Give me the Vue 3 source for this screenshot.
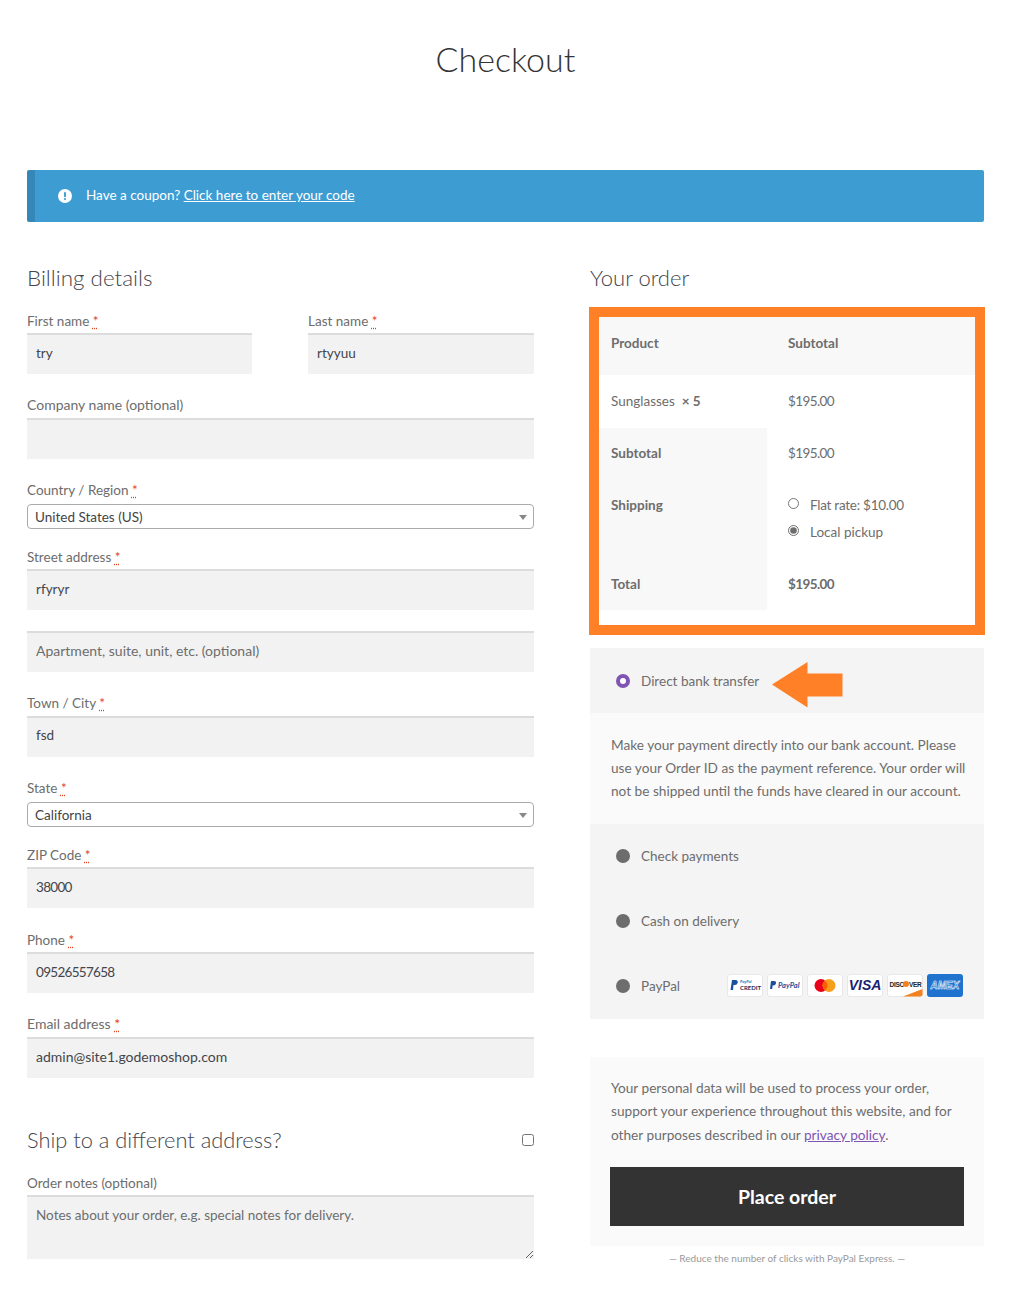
<script setup>
const rows = [
  { id: 'company', label: 'Company name (optional)', value: '' },
]
const afterCountry = [
  { label: 'Town / City', value: 'fsd' },
]
const lower = [
  { label: 'ZIP Code', value: '38000', cls: 'num low' },
  { label: 'Phone', value: '09526557658', cls: 'num low' },
  { label: 'Email address', value: 'admin@site1.godemoshop.com', cls: 'wide' },
]
</script>

<template>
  <div class="page">
    <h1 class="title">Checkout</h1>

    <div class="notice">
      <svg class="notice-icon" viewBox="0 0 16 16" width="14" height="14">
        <circle cx="8" cy="8" r="8" fill="#fff" />
        <rect x="6.9" y="3.4" width="2.2" height="5.8" rx="1" fill="#3d9cd2" />
        <circle cx="8" cy="11.4" r="1.25" fill="#3d9cd2" />
      </svg>
      <span class="notice-text">Have a coupon? <a href="#" class="notice-link">Click here to enter your code</a></span>
    </div>

    <div class="columns">
      <div class="billing">
        <h3 class="section-title billing-title">Billing details</h3>

        <div class="name-row">
          <div class="field">
            <label>First name <abbr>*</abbr></label>
            <input class="input" value="try" />
          </div>
          <div class="field">
            <label>Last name <abbr>*</abbr></label>
            <input class="input" value="rtyyuu" />
          </div>
        </div>

        <div v-for="r in rows" :key="r.id" class="field wide">
          <label>{{ r.label }}</label>
          <input class="input" :value="r.value" />
        </div>

        <div class="field field-select">
          <label>Country / Region <abbr>*</abbr></label>
          <div class="select">United States (US)<span class="caret"></span></div>
        </div>

        <div class="field low">
          <label>Street address <abbr>*</abbr></label>
          <input class="input" value="rfyryr" />
        </div>
        <div class="field wide">
          <input class="input" placeholder="Apartment, suite, unit, etc. (optional)" />
        </div>

        <div v-for="r in afterCountry" :key="r.label" class="field town">
          <label>{{ r.label }} <abbr>*</abbr></label>
          <input class="input" :value="r.value" />
        </div>

        <div class="field field-select">
          <label>State <abbr>*</abbr></label>
          <div class="select">California<span class="caret"></span></div>
        </div>

        <div v-for="r in lower" :key="r.label" class="field" :class="r.cls">
          <label>{{ r.label }} <abbr>*</abbr></label>
          <input class="input" :value="r.value" />
        </div>

        <div class="ship-row">
          <h3 class="section-title ship-title">Ship to a different address?</h3>
          <input type="checkbox" class="ship-check" />
        </div>

        <div class="field notes low">
          <label>Order notes (optional)</label>
          <textarea class="input textarea" placeholder="Notes about your order, e.g. special notes for delivery."></textarea>
        </div>
      </div>

      <div class="order">
        <h3 class="section-title">Your order</h3>

        <div class="order-frame">
          <div class="order-table">
            <div class="cell head strong"><span class="up3">Product</span></div>
            <div class="cell head strong"><span class="up3">Subtotal</span></div>
            <div class="cell"><span class="up1">Sunglasses&nbsp; <b>× 5</b></span></div>
            <div class="cell"><span class="up1 money">$195.00</span></div>
            <div class="cell side strong"><span class="up1">Subtotal</span></div>
            <div class="cell"><span class="up1 money">$195.00</span></div>
            <div class="cell side strong r-ship">Shipping</div>
            <div class="cell r-ship shipping">
              <label class="ship-opt"><input type="radio" name="ship" /><span class="rate">Flat rate: $10.00</span></label>
              <label class="ship-opt"><input type="radio" name="ship" checked />Local pickup</label>
            </div>
            <div class="cell side strong">Total</div>
            <div class="cell strong"><span class="money">$195.00</span></div>
          </div>
        </div>

        <div class="payments">
          <div class="pay-row">
            <span class="dot dot-on"></span>
            <span>Direct bank transfer</span>
            <svg class="arrow" width="71" height="46" viewBox="0 0 71 46">
              <path d="M0 22.5 L35.500 0 V11.500 H70.500 V34.500 H35.500 V45.500 Z" fill="#ff8026" />
            </svg>
          </div>
          <div class="pay-desc">Make your payment directly into our bank account. Please use your Order ID as the payment reference. Your order will not be shipped until the funds have cleared in our account.</div>
          <div class="pay-row pay-low"><span class="dot"></span><span>Check payments</span></div>
          <div class="pay-row pay-low"><span class="dot"></span><span>Cash on delivery</span></div>
          <div class="pay-row pay-low">
            <span class="dot"></span><span>PayPal</span>
            <div class="cards">
              <svg class="card" viewBox="0 0 36 23">
                <path d="M5 6h3.500c1.800 0 2.500 1 2.200 2.500-.3 1.700-1.500 2.500-3 2.500H6.500L6 16H3.500Z" fill="#1d4f9c" />
                <text x="13" y="9" class="t-mini" fill="#0a7bc1">PayPal</text>
                <text x="13" y="16" class="t-credit" fill="#1f2a5a">CREDIT</text>
              </svg>
              <svg class="card" viewBox="0 0 36 23">
                <path d="M4 7h3c1.500 0 2.200.9 2 2.200-.3 1.400-1.300 2.200-2.600 2.200H5.600L5.200 15H3Z" fill="#1d4f9c" />
                <text x="11" y="14" class="t-paypal" fill="#1d4f9c">PayPal</text>
              </svg>
              <svg class="card" viewBox="0 0 36 23">
                <circle cx="14" cy="11.500" r="6.500" fill="#eb001b" />
                <circle cx="22" cy="11.500" r="6.500" fill="#f79e1b" />
                <path d="M18 6.400a6.500 6.500 0 0 1 0 10.200 6.500 6.500 0 0 1 0-10.200Z" fill="#ff5f00" />
              </svg>
              <svg class="card" viewBox="0 0 36 23">
                <text x="18" y="16" text-anchor="middle" class="t-visa" fill="#1a1f71">VISA</text>
              </svg>
              <svg class="card" viewBox="0 0 36 23">
                <text x="2.500" y="12.500" class="t-disc" fill="#222">DISC</text>
                <circle cx="19" cy="10" r="3" fill="#f48120" />
                <text x="22" y="12.500" class="t-disc" fill="#222">VER</text>
                <path d="M16 22.500 L35.500 15 V20.500 A2 2 0 0 1 33.500 22.500 Z" fill="#f48120" />
              </svg>
              <svg class="card card-amex" viewBox="0 0 36 23">
                <text x="18" y="15" text-anchor="middle" class="t-amex" fill="#1f72cd" stroke="#fff" stroke-width=".5">AMEX</text>
              </svg>
            </div>
          </div>
        </div>

        <div class="terms">
          <p class="terms-text">Your personal data will be used to process your order, support your experience throughout this website, and for other purposes described in our <a href="#" class="policy">privacy policy</a>.</p>
          <button class="place">Place order</button>
        </div>
        <div class="express">— Reduce the number of clicks with PayPal Express. —</div>
      </div>
    </div>
  </div>
</template>

<style>
html, body { margin: 0; background: #fff; }
</style>

<style scoped>
.page {
  width: 1017px;
  height: 1298px;
  box-sizing: border-box;
  padding: 0 33px 0 27px;
  font-family: "Lato", "Liberation Sans", sans-serif;
  font-size: 13.500px;
  color: #6d6d6d;
  overflow: hidden;
}
.title {
  margin: 0;
  height: 170px;
  padding-top: 35px;
  box-sizing: border-box;
  text-align: center;
  font-size: 34px;
  line-height: 48px;
  font-weight: 300;
  color: #333;
}
.notice {
  height: 52px;
  background: #3d9cd2;
  border-left: 8px solid #3587b8;
  border-radius: 2px;
  box-sizing: border-box;
  padding-left: 23px;
  display: flex;
  align-items: center;
  gap: 14px;
  color: #fff;
}
.notice-icon { flex: none; }
.notice-text { position: relative; top: -1px; }
.notice-link { color: #fff; text-decoration: underline; }
.columns {
  display: flex;
  justify-content: space-between;
}
.billing { width: 507px; }
.order { width: 394px; }
.section-title {
  margin: 0;
  font-size: 22px;
  line-height: 30px;
  font-weight: 300;
  color: #43454b;
  padding-top: 41px;
  height: 85px;
  box-sizing: border-box;
}
.billing-title { height: 88px; font-size: 22.400px; }
.name-row {
  display: flex;
  justify-content: space-between;
}
.name-row .field:first-child { width: 225px; }
.name-row .field:last-child { width: 226px; }
.field {
  margin-bottom: 21px;
  display: flow-root;
}
.field label {
  display: block;
  height: 23px;
  line-height: 21px;
}
.name-row .field label,
.field.low label { line-height: 23px; }
.wide { font-size: 14px; }
.field.wide label { line-height: 19px; }
.field.wide .input { padding-bottom: 5px; }
.field.town .input { padding-bottom: 5px; }
.num .input { letter-spacing: -.7px; }
abbr {
  color: #e2401c;
  text-decoration: underline dotted;
  text-underline-offset: 2px;
}
.input {
  display: block;
  width: 100%;
  height: 41px;
  box-sizing: border-box;
  margin: 0;
  padding: 0 9px 3px;
  border: 0;
  border-top: 2px solid #dcdcdc;
  background: #f2f2f2;
  font: inherit;
  color: #43454b;
  outline: none;
}
.input::placeholder { color: #6d6d6d; opacity: 1; }
.field-select { margin-bottom: 17px; }
.field-select label { height: 24px; }
.select {
  position: relative;
  height: 25px;
  box-sizing: border-box;
  border: 1px solid #aaa;
  border-radius: 4px;
  padding-left: 7px;
  line-height: 24px;
  color: #444;
  background: #fff;
}
.caret {
  position: absolute;
  right: 6px;
  top: 10px;
  border-left: 4px solid transparent;
  border-right: 4px solid transparent;
  border-top: 5px solid #888;
}
.ship-row {
  display: flex;
  justify-content: space-between;
  align-items: flex-start;
  height: 73px;
}
.ship-title {
  padding-top: 26px;
  height: auto;
  font-size: 21.800px;
}
.ship-check {
  margin: 35px 0 0;
  width: 12px;
  height: 12px;
}
.textarea {
  height: 64px;
  padding-top: 8px;
  resize: vertical;
  line-height: 20px;
}
.notes { margin-bottom: 0; }
.order-frame {
  border: 10px solid #ff8026;
  margin: 0 -1px;
  height: 328px;
  box-sizing: border-box;
}
.order-table {
  display: grid;
  grid-template-columns: 168px 208px;
  grid-template-rows: 58px 53px 52px 78px 52px;
}
.cell {
  padding-left: 12px;
  display: flex;
  align-items: center;
}
.cell:nth-child(even) { padding-left: 21px; }
.strong { font-weight: 700; }
.money { letter-spacing: -.6px; }
.rate { letter-spacing: -.25px; }
.up1 { position: relative; top: -1px; }
.up3 { position: relative; top: -3px; }
.head { background: #f8f8f8; }
.side { background: #f8f8f8; }
.r-ship { align-items: flex-start; padding-top: 17px; }
.shipping { flex-direction: column; padding-top: 15px; }
.ship-opt {
  display: flex;
  align-items: center;
  height: 27px;
  margin-top: -4px;
}
.ship-opt + .ship-opt { margin-top: 0; }
.ship-opt input {
  margin: -3px 11px 0 0;
  width: 11px;
  height: 11px;
  accent-color: #6d6d6d;
}
.payments { margin-top: 13px; }
.pay-row {
  position: relative;
  height: 65px;
  box-sizing: border-box;
  background: #f4f4f4;
  padding-left: 26px;
  display: flex;
  align-items: center;
  gap: 11px;
}
.pay-low { padding-bottom: 2px; }
.dot {
  flex: none;
  width: 14px;
  height: 14px;
  border-radius: 50%;
  background: #6d6d6d;
}
.dot-on {
  box-sizing: border-box;
  background: #fff;
  border: 4.500px solid #7f54b3;
}
.arrow {
  position: absolute;
  left: 182px;
  top: 14px;
}
.pay-desc {
  height: 111px;
  box-sizing: border-box;
  background: #fafafa;
  padding: 21px 14px 0 21px;
  line-height: 23px;
  font-size: 13.650px;
}
.cards {
  position: absolute;
  left: 137px;
  top: 20px;
  display: flex;
  gap: 4px;
}
.card {
  width: 36px;
  height: 23px;
  background: #fff;
  border-radius: 3px;
  box-shadow: 0 0 0 1px #e8e8e8 inset;
}
.card-amex { background: #1f72cd; box-shadow: none; }
.t-mini { font: italic 700 4px "Lato", sans-serif; }
.t-credit { font: 700 6px "Lato", sans-serif; }
.t-paypal { font: italic 700 7.500px "Lato", sans-serif; }
.t-visa { font: italic 700 14px "Liberation Sans", sans-serif; }
.t-disc { font: 700 6.500px "Liberation Sans", sans-serif; letter-spacing: -.3px; }
.t-amex { font: italic 700 10px "Liberation Sans", sans-serif; }
.terms {
  margin-top: 38px;
  height: 189px;
  box-sizing: border-box;
  background: #fafafa;
  padding: 20px 20px 0 21px;
  font-size: 13.650px;
}
.terms-text {
  margin: 0;
  line-height: 23.400px;
}
.policy { color: #7f54b3; text-decoration: underline; }
.place {
  display: block;
  margin: 20px 0 0 -1px;
  width: 354px;
  height: 59px;
  border: 0;
  padding-bottom: 2px;
  background: #333;
  color: #fff;
  font: 700 19.500px "Lato", sans-serif;
}
.express {
  margin-top: 5px;
  text-align: center;
  font-size: 10px;
  line-height: 14px;
  color: #999;
}
</style>
